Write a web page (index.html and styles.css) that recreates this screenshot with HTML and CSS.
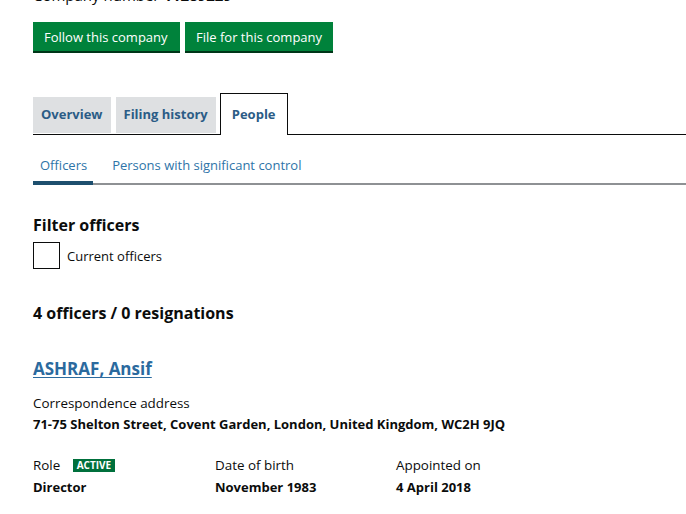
FILE: index.html
```html
<!DOCTYPE html>
<html lang="en">
<head>
<meta charset="utf-8">
<title>People - Companies House</title>
<link rel="stylesheet" href="styles.css">
</head>
<body>
<main class="page">
  <p class="company-number">Company number <strong>11289229</strong></p>
  <div class="actions">
    <a class="button" href="#">Follow this company</a>
    <a class="button" href="#">File for this company</a>
  </div>

  <ul class="tabs">
    <li class="tab"><a href="#">Overview</a></li>
    <li class="tab"><a href="#">Filing history</a></li>
    <li class="tab tab-active"><a href="#">People</a></li>
  </ul>

  <ul class="subtabs">
    <li class="subtab subtab-active"><a href="#">Officers</a></li>
    <li class="subtab"><a href="#">Persons with significant control</a></li>
  </ul>

  <h2 class="filter-title">Filter officers</h2>
  <label class="check">
    <span class="check-box"></span>
    <span class="check-label">Current officers</span>
  </label>

  <h2 class="count">4 officers / 0 resignations</h2>

  <div class="officer">
    <h3 class="officer-name"><a href="#">ASHRAF, Ansif</a></h3>
    <dl class="address">
      <dt>Correspondence address</dt>
      <dd>71-75 Shelton Street, Covent Garden, London, United Kingdom, WC2H 9JQ</dd>
    </dl>
    <div class="details">
      <dl class="detail">
        <dt>Role <span class="status">Active</span></dt>
        <dd>Director</dd>
      </dl>
      <dl class="detail">
        <dt>Date of birth</dt>
        <dd>November 1983</dd>
      </dl>
      <dl class="detail">
        <dt>Appointed on</dt>
        <dd>4 April 2018</dd>
      </dl>
    </div>
  </div>
</main>
</body>
</html>
```

FILE: styles.css
```css
* { box-sizing: border-box; }
html, body { margin: 0; padding: 0; background: #fff; }
body {
  font-family: "Open Sans", "Liberation Sans", sans-serif;
  color: #0b0c0c;
  overflow: hidden;
}
a { text-decoration: none; }
ul { list-style: none; margin: 0; padding: 0; }
dl, dd { margin: 0; }

.page {
  padding-left: 33px;
  margin-top: -15px;
}

.company-number {
  margin: 0;
  font-size: 15px;
  line-height: 20px;
  color: #0b0c0c;
}

.actions {
  display: flex;
  gap: 5px;
  margin-top: 17px;
}
.button {
  display: block;
  background: #00823b;
  color: #fff;
  font-size: 13px;
  line-height: 30px;
  height: 29px;
  padding: 0 11px;
  white-space: nowrap;
  box-shadow: 0 2px 0 #003618;
}
.button:first-child { width: 147px; }
.button:last-child { width: 148px; }

.tabs {
  display: flex;
  align-items: flex-end;
  gap: 5px;
  margin-top: 42px;
  border-bottom: 1px solid #0b0c0c;
  height: 42px;
}
.tab a {
  display: block;
  background: #dee0e2;
  color: #2b5c86;
  font-weight: 700;
  font-size: 13px;
  height: 36px;
  line-height: 34px;
  padding: 0 8px;
  margin-bottom: 1px;
}
.tab:nth-child(2) { margin-right: -1px; }
.tab-active a {
  background: #fff;
  border: 1px solid #0b0c0c;
  border-bottom: 0;
  height: 42px;
  line-height: 40px;
  padding: 0 11px;
  margin-bottom: -1px;
}

.subtabs {
  display: flex;
  margin-top: 14px;
  border-bottom: 2px solid #8e9194;
  gap: 12px;
}
.subtab a {
  display: block;
  color: #2e74a8;
  font-size: 13px;
  line-height: 32px;
  padding: 0 7px 3px;
  margin-bottom: -2px;
}
.subtab-active a {
  border-bottom: 4px solid #1d4f6e;
  padding-bottom: 0;
  padding-right: 6px;
}

.filter-title {
  margin: 30px 0 0;
  font-size: 16px;
  line-height: 20px;
  font-weight: 700;
}
.check {
  display: flex;
  align-items: center;
  gap: 7px;
  margin-top: 7px;
}
.check-box {
  width: 27px;
  height: 27px;
  border: 1px solid #0b0c0c;
}
.check-label {
  font-size: 13px;
  color: #0b0c0c;
}

.count {
  margin: 34px 0 0;
  font-size: 16px;
  line-height: 20px;
  font-weight: 700;
}

.officer { margin-top: 35px; }
.officer-name {
  margin: 0;
  font-size: 17px;
  line-height: 22px;
  font-weight: 700;
}
.officer-name a {
  color: #2b6a9e;
  text-decoration: underline;
  text-underline-offset: 2px;
}

.address { margin-top: 13px; }
dt {
  font-size: 13.4px;
  line-height: 20px;
  color: #0b0c0c;
}
dd {
  font-size: 13px;
  line-height: 20px;
  font-weight: 700;
  margin-top: 1px;
}

.details {
  display: grid;
  grid-template-columns: 182px 181px 181px;
  margin-top: 21px;
}
.detail dd { margin-top: 2px; }
.status {
  display: inline-block;
  background: #00703c;
  color: #fff;
  font-size: 10px;
  font-weight: 700;
  text-transform: uppercase;
  line-height: 13px;
  padding: 0 4px;
  margin-left: 9px;
  vertical-align: 1px;
}
```
